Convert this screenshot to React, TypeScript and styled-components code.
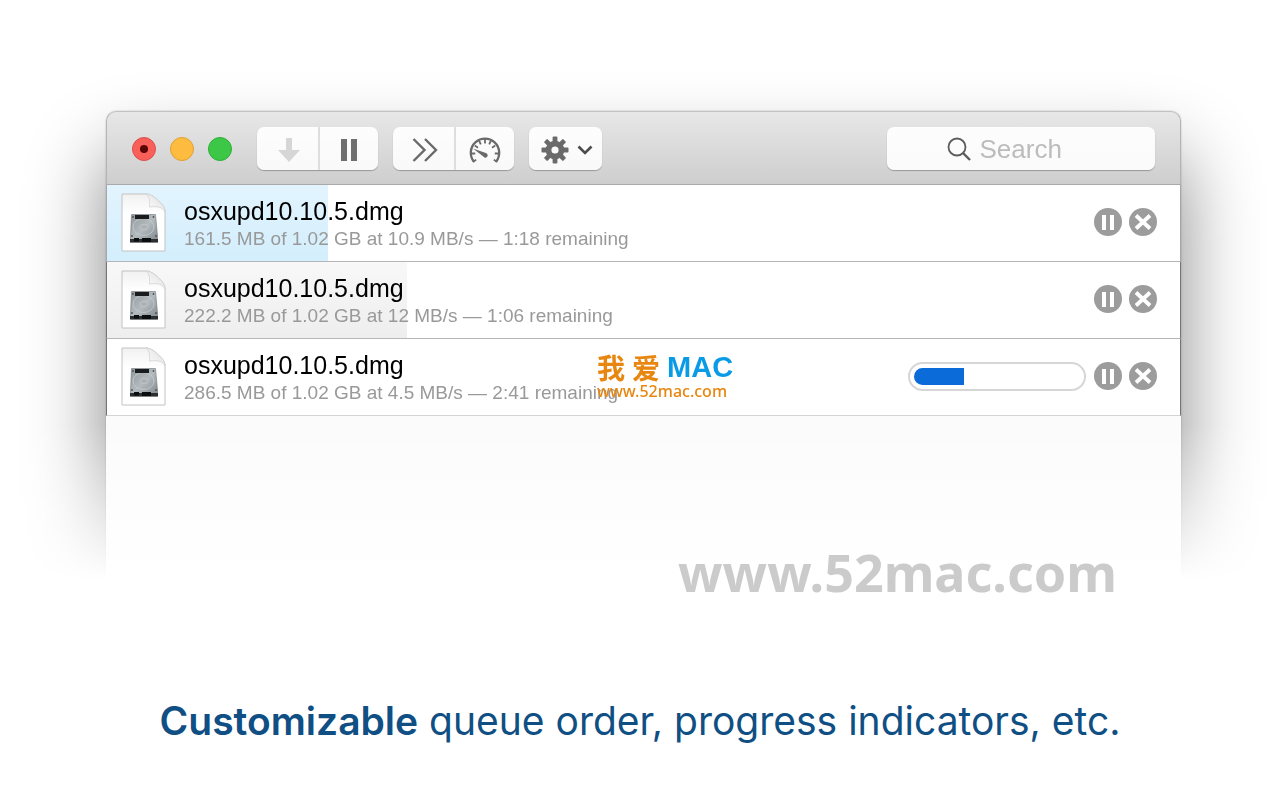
import React from "react";
import styled, { createGlobalStyle } from "styled-components";

const GlobalStyle = createGlobalStyle`
  *, *::before, *::after { box-sizing: border-box; }
  body {
    margin: 0;
    background: #fff;
    font-family: "Liberation Sans", Arial, sans-serif;
  }
  button { font: inherit; padding: 0; border: 0; cursor: pointer; }
`;

const Page = styled.main`
  overflow: hidden;
  min-height: 100vh;
  background: #fff;
`;

const Stage = styled.section`
  padding: 111px 99px 0 106px;
  mask-image: linear-gradient(to bottom, #000 424px, rgba(0, 0, 0, 0.5) 500px, transparent 580px);
`;

const Window = styled.div`
  position: relative;
  min-height: 560px;
  border-radius: 10px 10px 0 0;
  background: #fbfbfb;
  box-shadow: 0 46px 78px rgba(0, 0, 0, 0.48), 0 0 2px rgba(0, 0, 0, 0.25);
`;

const Toolbar = styled.header`
  display: flex;
  align-items: center;
  gap: 15px;
  height: 74px;
  padding: 1px 25px 0;
  border: 1px solid #b4b4b4;
  border-top-color: #c2c2c2;
  border-bottom-color: #a9a9a9;
  border-radius: 10px 10px 0 0;
  background: linear-gradient(#e7e7e7, #cecece);
`;

const Lights = styled.div`
  display: flex;
  gap: 14px;
  margin-right: 10px;
`;

const Light = styled.button<{ $fill: string; $rim: string }>`
  display: grid;
  place-items: center;
  width: 24px;
  height: 24px;
  border: 1px solid ${(p) => p.$rim};
  border-radius: 50%;
  background: ${(p) => p.$fill};
`;

const EditedDot = styled.span`
  width: 8px;
  height: 8px;
  border-radius: 50%;
  background: #5c0505;
`;

const ButtonGroup = styled.div`
  display: flex;
  height: 43px;
  border-radius: 7px;
  background: linear-gradient(#fdfdfd, #f9f9f9);
  box-shadow: 0 1px 1px rgba(0, 0, 0, 0.28);
`;

const ToolButton = styled.button<{ $wide?: boolean }>`
  display: grid;
  grid-auto-flow: column;
  place-content: center;
  align-items: center;
  gap: 8px;
  width: ${(p) => (p.$wide ? 73 : 61)}px;
  padding: 2px 0 0 2px;
  background: transparent;
  & + & { width: 60px; padding-left: 0; border-left: 2px solid #dedede; }
`;

const SearchBox = styled.label`
  display: flex;
  align-items: center;
  justify-content: center;
  gap: 9px;
  width: 268px;
  height: 43px;
  margin-left: auto;
  border-radius: 7px;
  background: linear-gradient(#fdfdfd, #fafafa);
  box-shadow: 0 1px 1px rgba(0, 0, 0, 0.28);
`;

const SearchInput = styled.input`
  width: 116px;
  padding: 0;
  border: 0;
  outline: 0;
  background: transparent;
  font: 26px/32px "Liberation Sans", Arial, sans-serif;
  color: #444;
  &::placeholder { color: #bcbcbc; opacity: 1; }
`;

const Queue = styled.ul`
  margin: 0;
  padding: 0;
  list-style: none;
`;

const Row = styled.li<{ $edge: string; $tint: string }>`
  display: flex;
  align-items: center;
  height: 77px;
  padding: 0 23px 2px 14px;
  border: 1px solid ${(p) => p.$edge};
  border-top: 0;
  border-bottom-color: #b5b5b5;
  background-color: #fff;
  background-image: ${(p) => p.$tint};
  background-repeat: no-repeat;
  &:last-child { border-bottom-color: #d4d4d4; }
`;

const Details = styled.div`
  flex: 1;
  min-width: 0;
  margin-left: 18px;
  padding-top: 2px;
`;

const FileName = styled.h2`
  margin: 0;
  font-size: 25px;
  line-height: 32px;
  font-weight: 400;
  color: #000;
`;

const Status = styled.p`
  margin: 0;
  font-size: 19px;
  line-height: 24px;
  color: #999;
`;

const Track = styled.div`
  width: 178px;
  height: 29px;
  padding: 4px;
  border: 2px solid #d6d6d6;
  border-radius: 15px;
  background: #fff;
`;

const Bar = styled.div`
  height: 100%;
  border-radius: 9px 0 0 9px;
  background: #0b6bd8;
`;

const Actions = styled.div`
  display: flex;
  gap: 7px;
  margin-left: 8px;
`;

const RoundButton = styled.button`
  width: 28px;
  height: 28px;
  border-radius: 50%;
  background: transparent;
  svg { display: block; }
`;

const Badge = styled.div`
  position: absolute;
  top: 240px;
  left: 491px;
`;

const BadgeTitle = styled.div`
  display: flex;
  align-items: center;
  gap: 7px;
  height: 32px;
  font: 700 28px/32px "Noto Sans CJK SC", sans-serif;
  color: #e8860f;
`;

const BadgeLatin = styled.span`
  font: 700 29px/32px "Liberation Sans", Arial, sans-serif;
  color: #0a9be6;
`;

const BadgeSite = styled.div`
  font: 500 16px/16px "Noto Sans", sans-serif;
  color: #e8860f;
`;

const SiteMark = styled.div`
  padding: 0 163px 0 0;
  margin-top: -129px;
  height: 129px;
  position: relative;
  text-align: right;
  font: 700 52px/60px "Noto Sans", sans-serif;
  color: #cbcbcb;
`;

const Caption = styled.h1`
  margin: 22px 0 0;
  text-align: center;
  font: 400 39px/56px Inter, sans-serif;
  color: #0f4f84;
  strong { font-weight: 600; }
`;

const DownIcon = () => (
  <svg width="22" height="24" viewBox="0 0 22 24" aria-hidden="true">
    <path d="M8 0h6v12h8L11 24 0 12h8z" fill="#d6d6d6" />
  </svg>
);

const BarsIcon = () => (
  <svg width="16" height="22" viewBox="0 0 16 22" aria-hidden="true">
    <path d="M0 0h6v22H0zM10 0h6v22h-6z" fill="#6f6f6f" />
  </svg>
);

const ForwardIcon = () => (
  <svg width="26" height="24" viewBox="0 0 26 24" fill="none" stroke="#6a6a6a" strokeWidth="2.4" aria-hidden="true">
    <path d="M1.5 1l11 11-11 11M13 1l11 11-11 11" />
  </svg>
);

const GaugeIcon = () => (
  <svg width="34" height="28" viewBox="0 0 34 28" fill="none" stroke="#6a6a6a" aria-hidden="true">
    <path d="M5.800 25.600A14.200 14.200 0 1 1 28.200 25.600" strokeWidth="2.300" />
    <path
      d="M5 26l3.200-2.400M29 26l-3.200-2.400M3 17.500h4.200M31 17.500h-4.200M6.800 9.500l3.200 2.200M27.200 9.500L24 11.700M17 3v4.500M11 4.500l1.800 3.800M23 4.500l-1.800 3.800"
      strokeWidth="1.800"
    />
    <path d="M5 12.500l12.800 4.600a2.300 2.300 0 1 1-2.200 3.700z" fill="#6a6a6a" stroke="none" />
  </svg>
);

const GearIcon = () => (
  <svg width="28" height="28" viewBox="-14 -14 28 28" aria-hidden="true">
    <g fill="#6a6a6a">
      {[0, 45, 90, 135].map((angle) => (
        <rect key={angle} x="-2.400" y="-13.500" width="4.800" height="27" rx="1" transform={`rotate(${angle})`} />
      ))}
      <circle r="9.300" />
    </g>
    <circle r="3.600" fill="#fbfbfb" />
  </svg>
);

const ChevronIcon = () => (
  <svg width="16" height="10" viewBox="0 0 16 10" fill="none" stroke="#4c4c4c" strokeWidth="2.6" aria-hidden="true">
    <path d="M1.500 1.500L8 8l6.500-6.500" />
  </svg>
);

const SearchIcon = () => (
  <svg width="24" height="24" viewBox="0 0 24 24" fill="none" stroke="#5c5c5c" aria-hidden="true">
    <circle cx="10" cy="10" r="8.500" strokeWidth="1.800" />
    <path d="M16 16l7 7" strokeWidth="2.400" />
  </svg>
);

const PauseIcon = () => (
  <svg width="28" height="28" viewBox="0 0 28 28" aria-hidden="true">
    <circle cx="14" cy="14" r="14" fill="#9c9c9c" />
    <path d="M8 7h4v15H8zM16 7h4v15h-4z" fill="#fff" />
  </svg>
);

const CancelIcon = () => (
  <svg width="28" height="28" viewBox="0 0 28 28" aria-hidden="true">
    <circle cx="14" cy="14" r="14" fill="#9c9c9c" />
    <path d="M7 7.500l14 13M21 7.500l-14 13" stroke="#fff" strokeWidth="3.800" />
  </svg>
);

const DiskImageIcon = ({ id }: { id: string }) => (
  <svg width="45" height="59" viewBox="0 0 45 59" aria-hidden="true">
    <defs>
      <linearGradient id={`${id}-metal`} x1="0" y1="0" x2="1" y2="1">
        <stop offset="0" stopColor="#8f979b" />
        <stop offset="0.500" stopColor="#b4bbbe" />
        <stop offset="1" stopColor="#7f878b" />
      </linearGradient>
      <linearGradient id={`${id}-paper`} x1="0" y1="0" x2="0" y2="1">
        <stop offset="0" stopColor="#f1f1f1" />
        <stop offset="0.350" stopColor="#fff" />
      </linearGradient>
      <linearGradient id={`${id}-fold`} x1="0" y1="1" x2="1" y2="0">
        <stop offset="0" stopColor="#fff" />
        <stop offset="1" stopColor="#dedede" />
      </linearGradient>
    </defs>
    <path d="M1 1h24c4 0 8 2.500 12 6.500S44 14 44 19v39H1z" fill={`url(#${id}-paper)`} stroke="#c2c2c2" />
    <path d="M25 1c3 2 4 6 3.500 13C36 13 42 14 44 19c0-5-3-7.500-7-11.500S29 1 25 1z" fill={`url(#${id}-fold)`} stroke="#d2d2d2" strokeWidth="0.800" />
    <path d="M10.500 21.500h24L36.500 43v6h-27v-6z" fill={`url(#${id}-metal)`} stroke="#6f777b" strokeWidth="0.600" />
    <ellipse cx="22.500" cy="34" rx="10.500" ry="8.500" fill="none" stroke="#c6cdd0" strokeWidth="0.800" />
    <ellipse cx="23" cy="34" rx="4" ry="2.500" fill="#aab2b5" stroke="#ccd2d5" strokeWidth="0.600" />
    <path d="M14 22h14v4H14z" fill="#191b1c" />
    <path d="M9 46h28v3.500H9z" fill="#2b2f31" />
    <path d="M13 45h5v3.500h-5zM21 45h9v4h-9z" fill="#0c0d0d" />
    <g fill="#4a5053">
      <circle cx="12" cy="24" r="0.900" />
      <circle cx="32.500" cy="24" r="0.900" />
      <circle cx="11" cy="43" r="0.900" />
      <circle cx="35" cy="43" r="0.900" />
    </g>
  </svg>
);

interface Download {
  id: string;
  name: string;
  status: string;
  percent: number;
  edge: string;
  tint: string;
  bar: boolean;
}

const downloads: Download[] = [
  {
    id: "first", name: "osxupd10.10.5.dmg", status: "161.5 MB of 1.02 GB at 10.9 MB/s — 1:18 remaining",
    percent: 20.6, edge: "#a6a6a6", tint: "linear-gradient(#e2f4fe, #d3eefc)", bar: false,
  },
  {
    id: "second", name: "osxupd10.10.5.dmg", status: "222.2 MB of 1.02 GB at 12 MB/s — 1:06 remaining",
    percent: 28, edge: "#747474", tint: "linear-gradient(#f8f8f8, #eeeeee)", bar: false,
  },
  {
    id: "third", name: "osxupd10.10.5.dmg", status: "286.5 MB of 1.02 GB at 4.5 MB/s — 2:41 remaining",
    percent: 30, edge: "#747474", tint: "none", bar: true,
  },
];

export default function App() {
  return (
    <Page>
      <GlobalStyle />
      <Stage>
        <Window>
          <Toolbar>
            <Lights>
              <Light $fill="#f9605a" $rim="#dc4f49" aria-label="Close"><EditedDot /></Light>
              <Light $fill="#fdbc40" $rim="#dfa133" aria-label="Minimize" />
              <Light $fill="#3cc846" $rim="#2fae37" aria-label="Zoom" />
            </Lights>
            <ButtonGroup>
              <ToolButton aria-label="Resume"><DownIcon /></ToolButton>
              <ToolButton aria-label="Pause"><BarsIcon /></ToolButton>
            </ButtonGroup>
            <ButtonGroup>
              <ToolButton aria-label="Start all"><ForwardIcon /></ToolButton>
              <ToolButton aria-label="Speed limit"><GaugeIcon /></ToolButton>
            </ButtonGroup>
            <ButtonGroup>
              <ToolButton $wide aria-label="Actions"><GearIcon /><ChevronIcon /></ToolButton>
            </ButtonGroup>
            <SearchBox>
              <SearchIcon />
              <SearchInput type="text" placeholder="Search" aria-label="Search" />
            </SearchBox>
          </Toolbar>
          <Queue>
            {downloads.map((d) => (
              <Row key={d.id} $edge={d.edge} $tint={d.tint} style={{ backgroundSize: `${d.percent}% 100%` }}>
                <DiskImageIcon id={d.id} />
                <Details>
                  <FileName>{d.name}</FileName>
                  <Status>{d.status}</Status>
                </Details>
                {d.bar && (
                  <Track role="progressbar" aria-label={d.name} aria-valuenow={d.percent}>
                    <Bar style={{ width: `${d.percent}%` }} />
                  </Track>
                )}
                <Actions>
                  <RoundButton aria-label="Pause download"><PauseIcon /></RoundButton>
                  <RoundButton aria-label="Cancel download"><CancelIcon /></RoundButton>
                </Actions>
              </Row>
            ))}
          </Queue>
          <Badge>
            <BadgeTitle>
              <span>我</span>
              <span>爱</span>
              <BadgeLatin>MAC</BadgeLatin>
            </BadgeTitle>
            <BadgeSite>www.52mac.com</BadgeSite>
          </Badge>
        </Window>
      </Stage>
      <SiteMark>www.52mac.com</SiteMark>
      <Caption><strong>Customizable</strong> queue order, progress indicators, etc.</Caption>
    </Page>
  );
}
